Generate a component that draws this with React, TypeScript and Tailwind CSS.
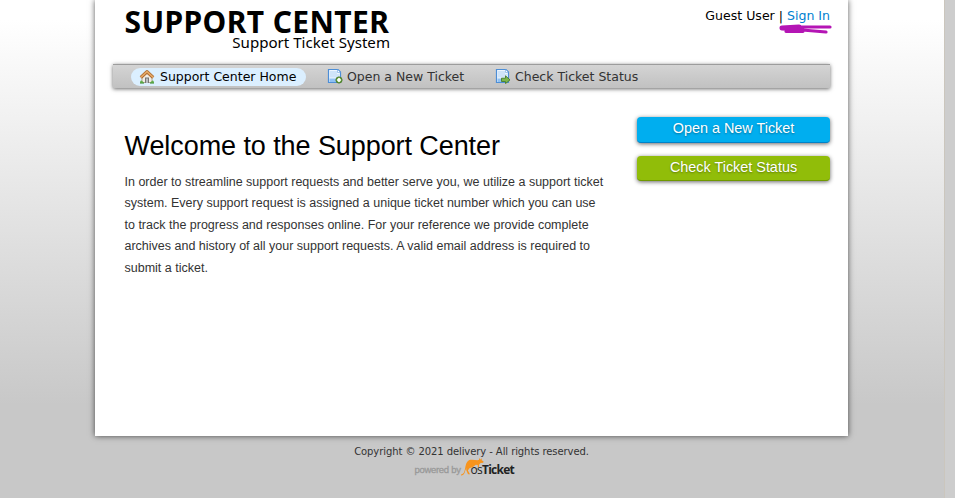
import type { ReactNode } from "react";

const sans = "font-['DejaVu_Sans',sans-serif]";

function HomeIcon() {
  return (
    <svg className="h-4 w-4 shrink-0" viewBox="0 0 16 16">
      <path d="M3 8v5.500h10V8L8 3.500z" fill="#f1ede6" stroke="#a5977f" strokeWidth=".8" />
      <rect x="6" y="8.500" width="4" height="5.500" fill="#777" />
      <rect x="7" y="9.500" width="2" height="4.500" fill="#b9bcc0" />
      <path d="M1.800 8.500 8 2.800l6.200 5.700" fill="none" stroke="#a8652c" strokeWidth="3.200" strokeLinejoin="round" />
      <path d="M1.800 8.300 8 2.700l6.200 5.600" fill="none" stroke="#e3a765" strokeWidth="1.800" strokeLinejoin="round" />
      <path d="M1 14c0-2 1-3 2-2s2 1 2 2zM11 14c0-1 1-1 2-2s2 0 2 2z" fill="#62b04b" />
      <path d="M1 14.200h4M11 14.200h4" stroke="#3f8a35" strokeWidth=".8" />
    </svg>
  );
}

function PageIcon({ children }: { children: ReactNode }) {
  return (
    <svg className="relative -top-px h-4 w-4 shrink-0" viewBox="0 0 16 16">
      <path d="M1.500 1.500h9.500l2.500 2.500v10.500h-12z" fill="#eef6fe" stroke="#4d8ed6" strokeWidth="1.200" />
      <path d="M3 3h7v3h2.500v3.500H3z" fill="#cfe4f9" />
      <path d="M2.500 10.500h10v3.500h-10z" fill="#8fc1f3" />
      <path d="M10.500 1.800v2.700h2.700" fill="#fff" stroke="#8bb8e8" strokeWidth=".8" />
      {children}
    </svg>
  );
}

function NewIcon() {
  return (
    <PageIcon>
      <circle cx="12" cy="12" r="3.100" fill="#70a948" stroke="#4b7b2d" />
      <path d="M12 10v4M10 12h4" stroke="#fff" strokeWidth="1.700" />
    </PageIcon>
  );
}

function StatusIcon() {
  return (
    <PageIcon>
      <path d="M6.500 10.200h4V7.800l4.500 4.100-4.500 3.700v-2.100h-4z" fill="#7cb74d" stroke="#477d2b" strokeWidth=".9" />
    </PageIcon>
  );
}

function Kangaroo() {
  return (
    <svg className="absolute left-[45px] top-0 h-[18px] w-[26px]" viewBox="0 0 26 18">
      <path
        d="M1 16.600c3-.5 3.400-3 4.200-6.500C6 5.500 7 2.500 10.500 1.800c3-.5 6 .8 8.300.3L19.600 0l1 1.700.9-1.700.3 2.300 1.800 1.300-.4 1.100-2.600.3-1.400 1.400-.3 2.600-1.100-.1-.1-2-1.900-.2-2.900 2.300-3.500 1.300-1.500 2.300 2.100 3.600H8l-1.800-4.100.3-2.200-1.300 2.800C4.500 16 3 17.600 1 17.600z"
        fill="#f7941d"
      />
    </svg>
  );
}

export default function App() {
  return (
    <div className={`flex h-[498px] w-[955px] overflow-hidden bg-[#cdcdcd] ${sans}`}>
      <div className="flex w-[945px] shrink-0 flex-col border-r border-[#cbc6bd] bg-[linear-gradient(to_bottom,#fff_20px,#c8c8c8_405px)]">
        <main className="ml-[95px] h-[436px] w-[753px] shrink-0 bg-white px-[18px] shadow-[0_0_6px_rgba(0,0,0,0.65)]">
          <header className="flex h-16 justify-between pl-[11.500px]">
            <div className="flex w-[265.500px] flex-col whitespace-nowrap font-['Noto_Sans',sans-serif] text-black">
              <h1 className="mt-[9px] h-[25px] text-[30px] font-bold leading-[26px] tracking-[0.4px]">SUPPORT CENTER</h1>
              <div className="text-right text-[15.100px] leading-4">Support Ticket System</div>
            </div>
            <div className="relative mt-[7px] h-7 whitespace-nowrap text-[12.550px] leading-[17px] text-black">
              Guest User | <a className="text-[#0080d0]">Sign In</a>
              <svg className="absolute right-[-2px] top-[17px] h-[10px] w-[53px]" viewBox="0 0 53 10">
                <path d="M3 4 20 3M3 4l19.500 1" fill="none" stroke="#b415b4" strokeWidth="5" strokeLinecap="round" />
                <path d="M20 3h31M7 7.300h17M23 6l24 2" fill="none" stroke="#b415b4" strokeWidth="3.200" strokeLinecap="round" />
              </svg>
            </div>
          </header>
          <nav className="flex h-6 w-[717px] items-center border-t border-[#9c9c9c] bg-linear-to-b from-[#d4d4d4] to-[#c1c1c1] pl-[18px] text-[12.500px] text-[#333] shadow-[0_1px_4px_rgba(0,0,0,0.6)]">
            <a className="flex h-[18px] w-[175px] items-center gap-[5px] whitespace-nowrap rounded-full bg-[#dbefff] pl-2 text-black"><HomeIcon /><span className="pt-px">Support Center Home</span></a>
            <a className="ml-[21px] flex w-[168px] items-center gap-1 whitespace-nowrap"><NewIcon /><span className="pt-px">Open a New Ticket</span></a>
            <a className="flex items-center gap-1 whitespace-nowrap"><StatusIcon /><span className="pt-px">Check Ticket Status</span></a>
          </nav>
          <div className="flex justify-between pl-[11.500px] pt-[29px] font-['Liberation_Sans',sans-serif]">
            <section className="w-[490px] pt-3">
              <h2 className="whitespace-nowrap text-[27px] leading-[34px] tracking-[-0.080px] text-black">Welcome to the Support Center</h2>
              <p className="mt-[8.500px] whitespace-nowrap text-[12.500px] leading-[21.500px] text-[#333]">
                In order to streamline support requests and better serve you, we utilize a support ticket<br />
                system. Every support request is assigned a unique ticket number which you can use<br />
                to track the progress and responses online. For your reference we provide complete<br />
                archives and history of all your support requests. A valid email address is required to<br />
                submit a ticket.
              </p>
            </section>
            <aside className="flex w-[193px] flex-col gap-[13px] text-center text-[14.400px] leading-[22px] text-white [text-shadow:0_1px_2px_rgba(0,0,0,0.35)]">
              <a className="h-[26px] rounded border-b border-[#0082c8] bg-[#00aeef] shadow-[0_1px_4px_rgba(0,0,0,0.6)]">Open a New Ticket</a>
              <a className="h-[25px] rounded border-b border-[#6f9800] bg-[#91bd09] shadow-[0_1px_4px_rgba(0,0,0,0.6)]">Check Ticket Status</a>
            </aside>
          </div>
        </main>
        <footer className="ml-[95px] flex w-[753px] flex-col items-center pt-[9px]">
          <p className="whitespace-nowrap text-[10px] leading-[13px] tracking-[-0.080px] text-[#333]">Copyright © 2021 delivery - All rights reserved.</p>
          <div className="relative mr-[14px] h-[20px] w-[100px] whitespace-nowrap font-['Liberation_Sans',sans-serif]">
            <span className="absolute left-0 top-[6px] text-[9.500px] leading-3 tracking-[-0.300px] text-[#999] [-webkit-text-stroke:0.300px_#999]">powered by</span>
            <Kangaroo />
            <span className="absolute left-[56px] top-[5px] font-['Open_Sans',sans-serif] text-[12px] leading-[14px] tracking-[-0.750px] text-[#222]">os<b>Ticket</b></span>
          </div>
        </footer>
      </div>
    </div>
  );
}
